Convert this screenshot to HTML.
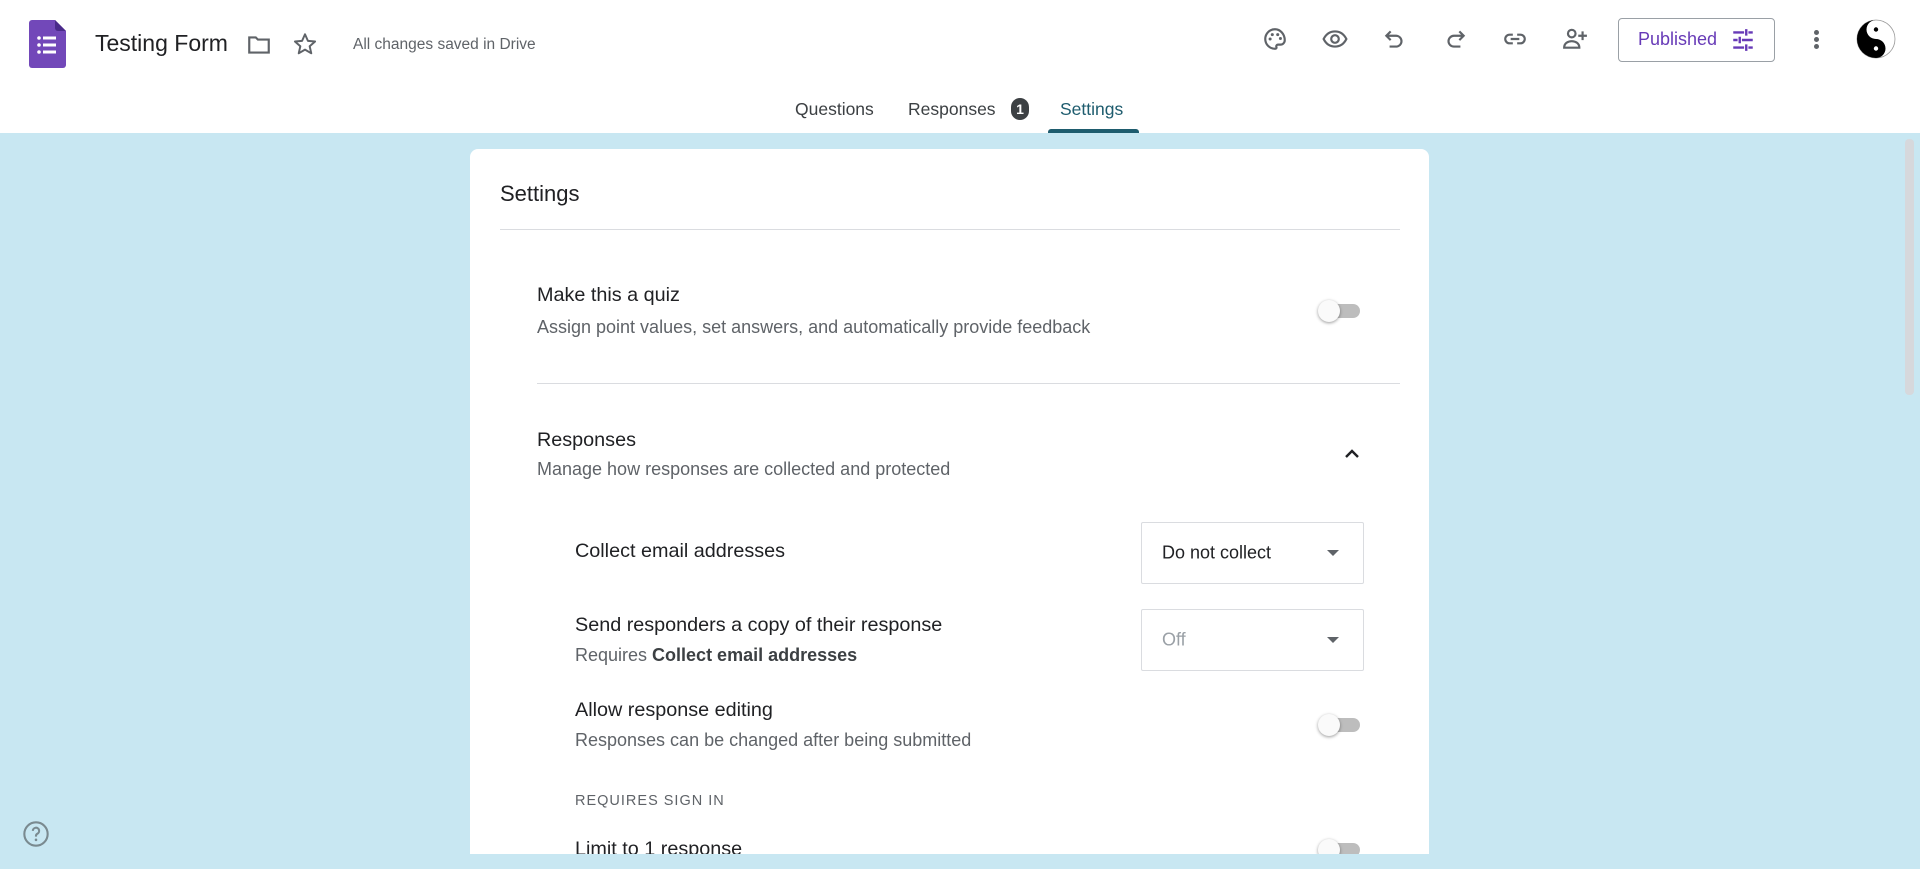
<!DOCTYPE html>
<html><head><meta charset="utf-8"><style>
*{margin:0;padding:0;box-sizing:border-box}
html{width:1920px;height:869px;overflow:hidden}
body{width:1920px;height:869px;overflow:hidden;background:#c8e7f2;font-family:"Liberation Sans",Arial,sans-serif;position:relative;color:#202124}
.hdr{position:absolute;left:0;top:0;width:1920px;height:133px;background:#fff}
.a{position:absolute}
.ic{position:absolute;width:26px;height:26px}
.t{position:absolute;white-space:nowrap}
.tog{position:absolute;width:44px;height:28px}
.tog .tr{position:absolute;left:8px;top:7px;width:34px;height:14px;border-radius:7px;background:#bdbdbd}
.tog .kn{position:absolute;left:0;top:3px;width:22px;height:22px;border-radius:50%;background:#fafafa;box-shadow:0 1px 3px rgba(0,0,0,.4)}
.dd{position:absolute;width:223px;border:1px solid #dadce0;border-radius:2px;background:#fff}
.dd span{position:absolute;left:20px;top:50%;transform:translateY(-50%);font-size:18px}
.dd i{position:absolute;right:24px;top:50%;margin-top:-3px;border-left:6px solid transparent;border-right:6px solid transparent;border-top:6px solid #5f6368}
.h{font-size:19.8px;color:#202124}
.s{font-size:18px;color:#5f6368}
</style></head><body>
<div class="hdr"></div>
<svg class="a" style="left:29px;top:20px" width="37" height="48" viewBox="0 0 37 48"><path d="M3 0H26L37 11V45a3 3 0 0 1-3 3H3a3 3 0 0 1-3-3V3a3 3 0 0 1 3-3z" fill="#7248b9"/><path d="M26 0L37 11H29a3 3 0 0 1-3-3z" fill="#4a2a8a"/><g fill="#fff"><circle cx="10" cy="18" r="1.8"/><circle cx="10" cy="25" r="1.8"/><circle cx="10" cy="32" r="1.8"/><rect x="14" y="16.5" width="13" height="3"/><rect x="14" y="23.5" width="13" height="3"/><rect x="14" y="30.5" width="13" height="3"/></g></svg>
<div class="t" style="left:95px;top:30px;font-size:23px;color:#202124">Testing Form</div>
<svg class="ic" style="left:246px;top:32px" viewBox="0 0 24 24"><path d="M3 5h6l2 2h10v12H3z" fill="none" stroke="#5f6368" stroke-width="2"/></svg>
<svg class="ic" style="left:292px;top:31px" viewBox="0 0 24 24"><path d="M12 3l2.7 6.1 6.6.6-5 4.4 1.5 6.5L12 17.2l-5.8 3.4 1.5-6.5-5-4.4 6.6-.6z" fill="none" stroke="#5f6368" stroke-width="1.8" stroke-linejoin="round"/></svg>
<div class="t" style="left:353px;top:36px;font-size:15.5px;color:#5f6368">All changes saved in Drive</div>
<svg class="ic" style="left:1262px;top:26px" viewBox="0 0 24 24"><path d="M12 3a9 9 0 0 0 0 18c1.2 0 1.6-.8 1.300-1.600-.4-1 .2-2.2 1.4-2.2H17a4 4 0 0 0 4-4c0-5.6-4-10.2-9-10.2z" fill="none" stroke="#5f6368" stroke-width="2"/><g fill="#5f6368"><circle cx="7.5" cy="12" r="1.4"/><circle cx="9.5" cy="8" r="1.4"/><circle cx="14.5" cy="8" r="1.4"/><circle cx="17" cy="11.5" r="1.4"/></g></svg>
<svg class="ic" style="left:1322px;top:26px" viewBox="0 0 24 24"><path d="M1.5 12C4 7 8 5 12 5s8 2 10.5 7c-2.5 5-6.5 7-10.5 7S4 17 1.5 12z" fill="none" stroke="#5f6368" stroke-width="2"/><circle cx="12" cy="12" r="3.5" fill="none" stroke="#5f6368" stroke-width="2"/></svg>
<svg class="ic" style="left:1382px;top:26px" viewBox="0 0 24 24"><path d="M8 5L4 9l4 4M4 9h9a5 5 0 0 1 0 10H7" fill="none" stroke="#5f6368" stroke-width="2"/></svg>
<svg class="ic" style="left:1442px;top:26px" viewBox="0 0 24 24"><path d="M16 5l4 4-4 4M20 9h-9a5 5 0 0 0 0 10h6" fill="none" stroke="#5f6368" stroke-width="2"/></svg>
<svg class="ic" style="left:1502px;top:26px" viewBox="0 0 24 24"><path d="M10 8H7a4 4 0 0 0 0 8h3M14 8h3a4 4 0 0 1 0 8h-3M8 12h8" fill="none" stroke="#5f6368" stroke-width="2"/></svg>
<svg class="ic" style="left:1562px;top:26px" viewBox="0 0 24 24"><circle cx="9" cy="7" r="3.5" fill="none" stroke="#5f6368" stroke-width="2"/><path d="M2 20c0-4 3.5-6 7-6s7 2 7 6zM19 5v8M15 9h8" fill="none" stroke="#5f6368" stroke-width="2"/></svg>
<div class="a" style="left:1618px;top:18px;width:157px;height:44px;border:1px solid #9aa0a6;border-radius:4px"></div>
<div class="t" style="left:1638px;top:29px;font-size:18px;color:#673ab7">Published</div>
<svg class="ic" style="left:1730px;top:27px" viewBox="0 0 24 24"><path d="M3 5h10M17 5h4M15 2v6M3 12h4M11 12h10M9 9v6M3 19h10M17 19h4M15 16v6" fill="none" stroke="#673ab7" stroke-width="2.2"/></svg>
<div class="a" style="left:1814px;top:30px;width:5px;height:5px;border-radius:50%;background:#5f6368"></div>
<div class="a" style="left:1814px;top:37px;width:5px;height:5px;border-radius:50%;background:#5f6368"></div>
<div class="a" style="left:1814px;top:44px;width:5px;height:5px;border-radius:50%;background:#5f6368"></div>
<svg class="a" style="left:1856px;top:19px" width="40" height="40" viewBox="0 0 40 40"><circle cx="20" cy="20" r="19" fill="#fff" stroke="#999" stroke-width=".8"/><path d="M20 1a19 19 0 0 0 0 38a9.5 9.5 0 0 0 0-19a9.5 9.5 0 0 1 0-19z" fill="#000"/><circle cx="20" cy="10.5" r="2.2" fill="#000"/><circle cx="20" cy="29.5" r="2.2" fill="#fff"/></svg>
<div class="t" style="left:795px;top:99px;font-size:17.5px;color:#3c4043">Questions</div>
<div class="t" style="left:908px;top:99px;font-size:17.5px;color:#3c4043">Responses</div>
<div class="a" style="left:1011px;top:98px;width:18px;height:22px;border-radius:9px;background:#3c4043;color:#fff;font-size:14px;font-weight:bold;text-align:center;line-height:22px">1</div>
<div class="t" style="left:1060px;top:99px;font-size:17.5px;color:#1e5c6e">Settings</div>
<div class="a" style="left:1048px;top:129px;width:91px;height:4px;background:#1e5c6e;border-radius:3px 3px 0 0"></div>
<div class="a" style="left:1905px;top:139px;width:9px;height:256px;background:#d6d8dc;border-radius:4px"></div>
<svg class="a" style="left:22px;top:820px" width="28" height="28" viewBox="0 0 24 24"><circle cx="12" cy="12" r="10" fill="none" stroke="#7a8a90" stroke-width="1.8"/><path d="M9.3 9.3a2.7 2.7 0 1 1 3.8 2.5c-.8.4-1.1.9-1.1 1.8v.6" fill="none" stroke="#7a8a90" stroke-width="1.8"/><circle cx="12" cy="17" r="1.1" fill="#7a8a90"/></svg>
<div class="a" style="left:470px;top:149px;width:959px;height:705px;background:#fff;border-radius:8px 8px 0 0;overflow:hidden">
<div class="t" style="left:30px;top:32px;font-size:22px;color:#202124">Settings</div>
<div class="a" style="left:30px;top:80px;width:900px;height:1px;background:#dadce0"></div>
<div class="t h" style="left:67px;top:135px">Make this a quiz</div>
<div class="t s" style="left:67px;top:168px">Assign point values, set answers, and automatically provide feedback</div>
<div class="tog" style="left:848px;top:148px"><div class="tr"></div><div class="kn"></div></div>
<div class="a" style="left:67px;top:234px;width:863px;height:1px;background:#dadce0"></div>
<div class="t h" style="left:67px;top:280px">Responses</div>
<div class="t s" style="left:67px;top:310px">Manage how responses are collected and protected</div>
<svg class="a" style="left:872px;top:295px" width="20" height="20" viewBox="0 0 20 20"><path d="M4 13l6-6 6 6" fill="none" stroke="#202124" stroke-width="2.4"/></svg>
<div class="t h" style="left:105px;top:391px">Collect email addresses</div>
<div class="dd" style="left:671px;top:373px;height:62px"><span style="color:#202124">Do not collect</span><i></i></div>
<div class="t h" style="left:105px;top:465px">Send responders a copy of their response</div>
<div class="t s" style="left:105px;top:496px">Requires <b style="color:#3c4043">Collect email addresses</b></div>
<div class="dd" style="left:671px;top:460px;height:62px"><span style="color:#9aa0a6">Off</span><i></i></div>
<div class="t h" style="left:105px;top:550px">Allow response editing</div>
<div class="t s" style="left:105px;top:581px">Responses can be changed after being submitted</div>
<div class="tog" style="left:848px;top:562px"><div class="tr"></div><div class="kn"></div></div>
<div class="t" style="left:105px;top:644px;font-size:14.5px;color:#5f6368;letter-spacing:1px">REQUIRES SIGN IN</div>
<div class="t h" style="left:105px;top:689px">Limit to 1 response</div>
<div class="tog" style="left:848px;top:687px"><div class="tr"></div><div class="kn"></div></div>
</div>
</body></html>
